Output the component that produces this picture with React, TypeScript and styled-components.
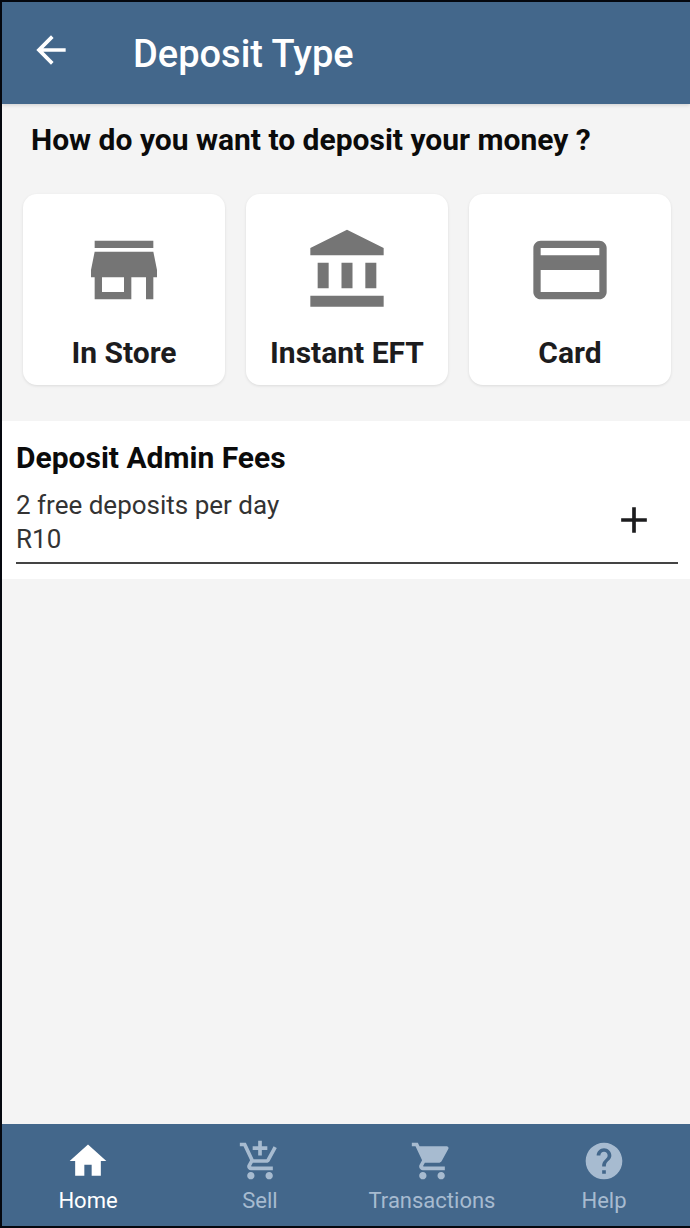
import React from "react";
import styled, { createGlobalStyle } from "styled-components";

const color = {
  brand: "#43678b",
  surface: "#ffffff",
  page: "#f4f4f4",
  frame: "#05080f",
  text: "#0b0b0b",
  label: "#1c1c1e",
  body: "#333333",
  icon: "#757575",
  navMuted: "#a7bbd0",
};

const GlobalStyle = createGlobalStyle`
  *, *::before, *::after { box-sizing: border-box; }
  body {
    margin: 0;
    background: ${color.page};
    font-family: Roboto, "Liberation Sans", sans-serif;
  }
  button { font: inherit; color: inherit; border: 0; padding: 0; cursor: pointer; }
  h1, h2, p { margin: 0; }
`;

const Screen = styled.div`
  display: flex;
  flex-direction: column;
  min-height: 100vh;
  border: 2px solid ${color.frame};
  border-right: 0;
  background: ${color.page};
`;

const Header = styled.header`
  display: flex;
  align-items: flex-end;
  gap: 60px;
  padding: 26px 27px;
  background: ${color.brand};
  color: #ffffff;
  box-shadow: 0 1px 4px rgba(0, 0, 0, 0.16);
`;

const IconButton = styled.button`
  display: flex;
  flex: none;
  background: none;
`;

const BackButton = styled(IconButton)`
  && { padding-bottom: 6px; }
`;

const Title = styled.h1`
  font-size: 38px;
  line-height: 48px;
  font-weight: 500;
`;

const Main = styled.main`
  flex: 1;
`;

const Question = styled.h2`
  padding: 18px 29px 36px;
  font-size: 30px;
  line-height: 36px;
  font-weight: 700;
  color: ${color.text};
`;

const Options = styled.div`
  display: grid;
  grid-template-columns: repeat(3, 1fr);
  gap: 21px;
  padding: 0 19px 0 21px;
`;

const Option = styled.button`
  display: flex;
  flex-direction: column;
  align-items: center;
  gap: 21px;
  && { padding: 32px 8px 14px; }
  border-radius: 14px;
  background: ${color.surface};
  box-shadow: 0 1px 3px rgba(0, 0, 0, 0.1);
`;

const OptionLabel = styled.span`
  font-size: 30px;
  line-height: 36px;
  font-weight: 700;
  white-space: nowrap;
  color: ${color.label};
`;

const Fees = styled.section`
  margin-top: 36px;
  padding: 19px 12px 15px 14px;
  background: ${color.surface};
`;

const FeesTitle = styled.h2`
  font-size: 30px;
  line-height: 36px;
  font-weight: 700;
  color: ${color.text};
`;

const FeesRow = styled.div`
  display: flex;
  align-items: flex-start;
  justify-content: space-between;
  padding: 12px 22px 6px 0;
  border-bottom: 2px solid #444444;
`;

const ExpandButton = styled(IconButton)`
  margin-top: 10px;
`;

const FeesText = styled.p`
  font-size: 26px;
  line-height: 34px;
  color: ${color.body};
`;

const Nav = styled.nav`
  display: grid;
  grid-template-columns: repeat(4, 1fr);
  background: ${color.brand};
`;

const NavLink = styled.a<{ $active?: boolean }>`
  display: flex;
  flex-direction: column;
  align-items: center;
  gap: 4px;
  padding: 15px 0 11px;
  font-size: 22px;
  line-height: 28px;
  text-decoration: none;
  color: ${(p) => (p.$active ? "#ffffff" : color.navMuted)};
`;

const Svg = styled.svg<{ $tone?: string }>`
  display: block;
  flex: none;
  fill: ${(p) => p.$tone ?? "currentColor"};
`;

const paths = {
  back: "M20 11H7.830l5.590-5.590L12 4l-8 8 8 8 1.410-1.410L7.830 13H20v-2z",
  store: "M20 4H4v2h16V4zm1 10v-2l-1-5H4l-1 5v2h1v6h10v-6h4v6h2v-6h1zm-9 4H6v-4h6v4z",
  bank: "M4 10h3v7H4zM10.500 10h3v7h-3zM2 19h20v3H2zM17 10h3v7h-3zM12 1L2 6v2h20V6z",
  card: "M20 4H4c-1.110 0-1.990.89-1.990 2L2 18c0 1.110.89 2 2 2h16c1.110 0 2-.89 2-2V6c0-1.110-.89-2-2-2zm0 14H4v-6h16v6zm0-10H4V6h16v2z",
  add: "M19 13h-6v6h-2v-6H5v-2h6V5h2v6h6v2z",
  home: "M10 20v-6h4v6h5v-8h3L12 3 2 12h3v8z",
  sell: "M11 9h2V6h3V4h-3V1h-2v3H8v2h3v3zm-4 9c-1.100 0-1.990.9-1.990 2S5.900 22 7 22s2-.9 2-2-.9-2-2-2zm10 0c-1.100 0-1.990.9-1.990 2s.89 2 1.990 2 2-.9 2-2-.9-2-2-2zm-9.830-3.250l.03-.12.9-1.630h7.450c.75 0 1.410-.41 1.750-1.030l3.860-7.010L19.420 4h-.01l-1.100 2-2.760 5H8.530l-.13-.27L6.160 6l-.95-2-.94-2H1v2h2l3.600 7.590-1.350 2.450c-.16.28-.25.61-.25.96 0 1.100.9 2 2 2h12v-2H7.420c-.13 0-.25-.11-.25-.25z",
  cart: "M7 18c-1.100 0-1.990.9-1.990 2S5.900 22 7 22s2-.9 2-2-.9-2-2-2zM1 2v2h2l3.600 7.590-1.350 2.450c-.16.28-.25.61-.25.96 0 1.100.9 2 2 2h12v-2H7.420c-.14 0-.25-.11-.25-.25l.03-.12.9-1.630h7.450c.75 0 1.410-.41 1.750-1.030l3.580-6.490c.08-.14.12-.31.12-.48 0-.55-.45-1-1-1H5.210l-.94-2H1zm16 16c-1.100 0-1.990.9-1.990 2s.89 2 1.990 2 2-.9 2-2-.9-2-2-2z",
  help: "M12 2C6.480 2 2 6.480 2 12s4.480 10 10 10 10-4.480 10-10S17.520 2 12 2zm1 17h-2v-2h2v2zm2.070-7.750l-.9.92C13.450 12.900 13 13.500 13 15h-2v-.5c0-1.100.45-2.100 1.170-2.830l1.240-1.260c.37-.36.59-.86.59-1.410 0-1.100-.9-2-2-2s-2 .9-2 2H8c0-2.210 1.790-4 4-4s4 1.790 4 4c0 .88-.36 1.680-.93 2.250z",
};

type IconName = keyof typeof paths;

function Icon({ name, size = 44, tone }: { name: IconName; size?: number; tone?: string }) {
  return (
    <Svg width={size} height={size} viewBox="0 0 24 24" aria-hidden="true" $tone={tone}>
      <path d={paths[name]} />
    </Svg>
  );
}

const options: { icon: IconName; label: string }[] = [
  { icon: "store", label: "In Store" },
  { icon: "bank", label: "Instant EFT" },
  { icon: "card", label: "Card" },
];

const navItems: { icon: IconName; label: string; active?: boolean }[] = [
  { icon: "home", label: "Home", active: true },
  { icon: "sell", label: "Sell" },
  { icon: "cart", label: "Transactions" },
  { icon: "help", label: "Help" },
];

export default function App() {
  return (
    <>
      <GlobalStyle />
      <Screen>
        <Header>
          <BackButton type="button" aria-label="Back">
            <Icon name="back" />
          </BackButton>
          <Title>Deposit Type</Title>
        </Header>
        <Main>
          <Question>How do you want to deposit your money ?</Question>
          <Options>
            {options.map((o) => (
              <Option key={o.label} type="button">
                <Icon name={o.icon} size={88} tone={color.icon} />
                <OptionLabel>{o.label}</OptionLabel>
              </Option>
            ))}
          </Options>
          <Fees>
            <FeesTitle>Deposit Admin Fees</FeesTitle>
            <FeesRow>
              <div>
                <FeesText>2 free deposits per day</FeesText>
                <FeesText>R10</FeesText>
              </div>
              <ExpandButton type="button" aria-label="Show fee details">
                <Icon name="add" tone={color.label} />
              </ExpandButton>
            </FeesRow>
          </Fees>
        </Main>
        <Nav aria-label="Main">
          {navItems.map((n) => (
            <NavLink key={n.label} href="#" $active={n.active} aria-current={n.active ? "page" : undefined}>
              <Icon name={n.icon} />
              {n.label}
            </NavLink>
          ))}
        </Nav>
      </Screen>
    </>
  );
}
